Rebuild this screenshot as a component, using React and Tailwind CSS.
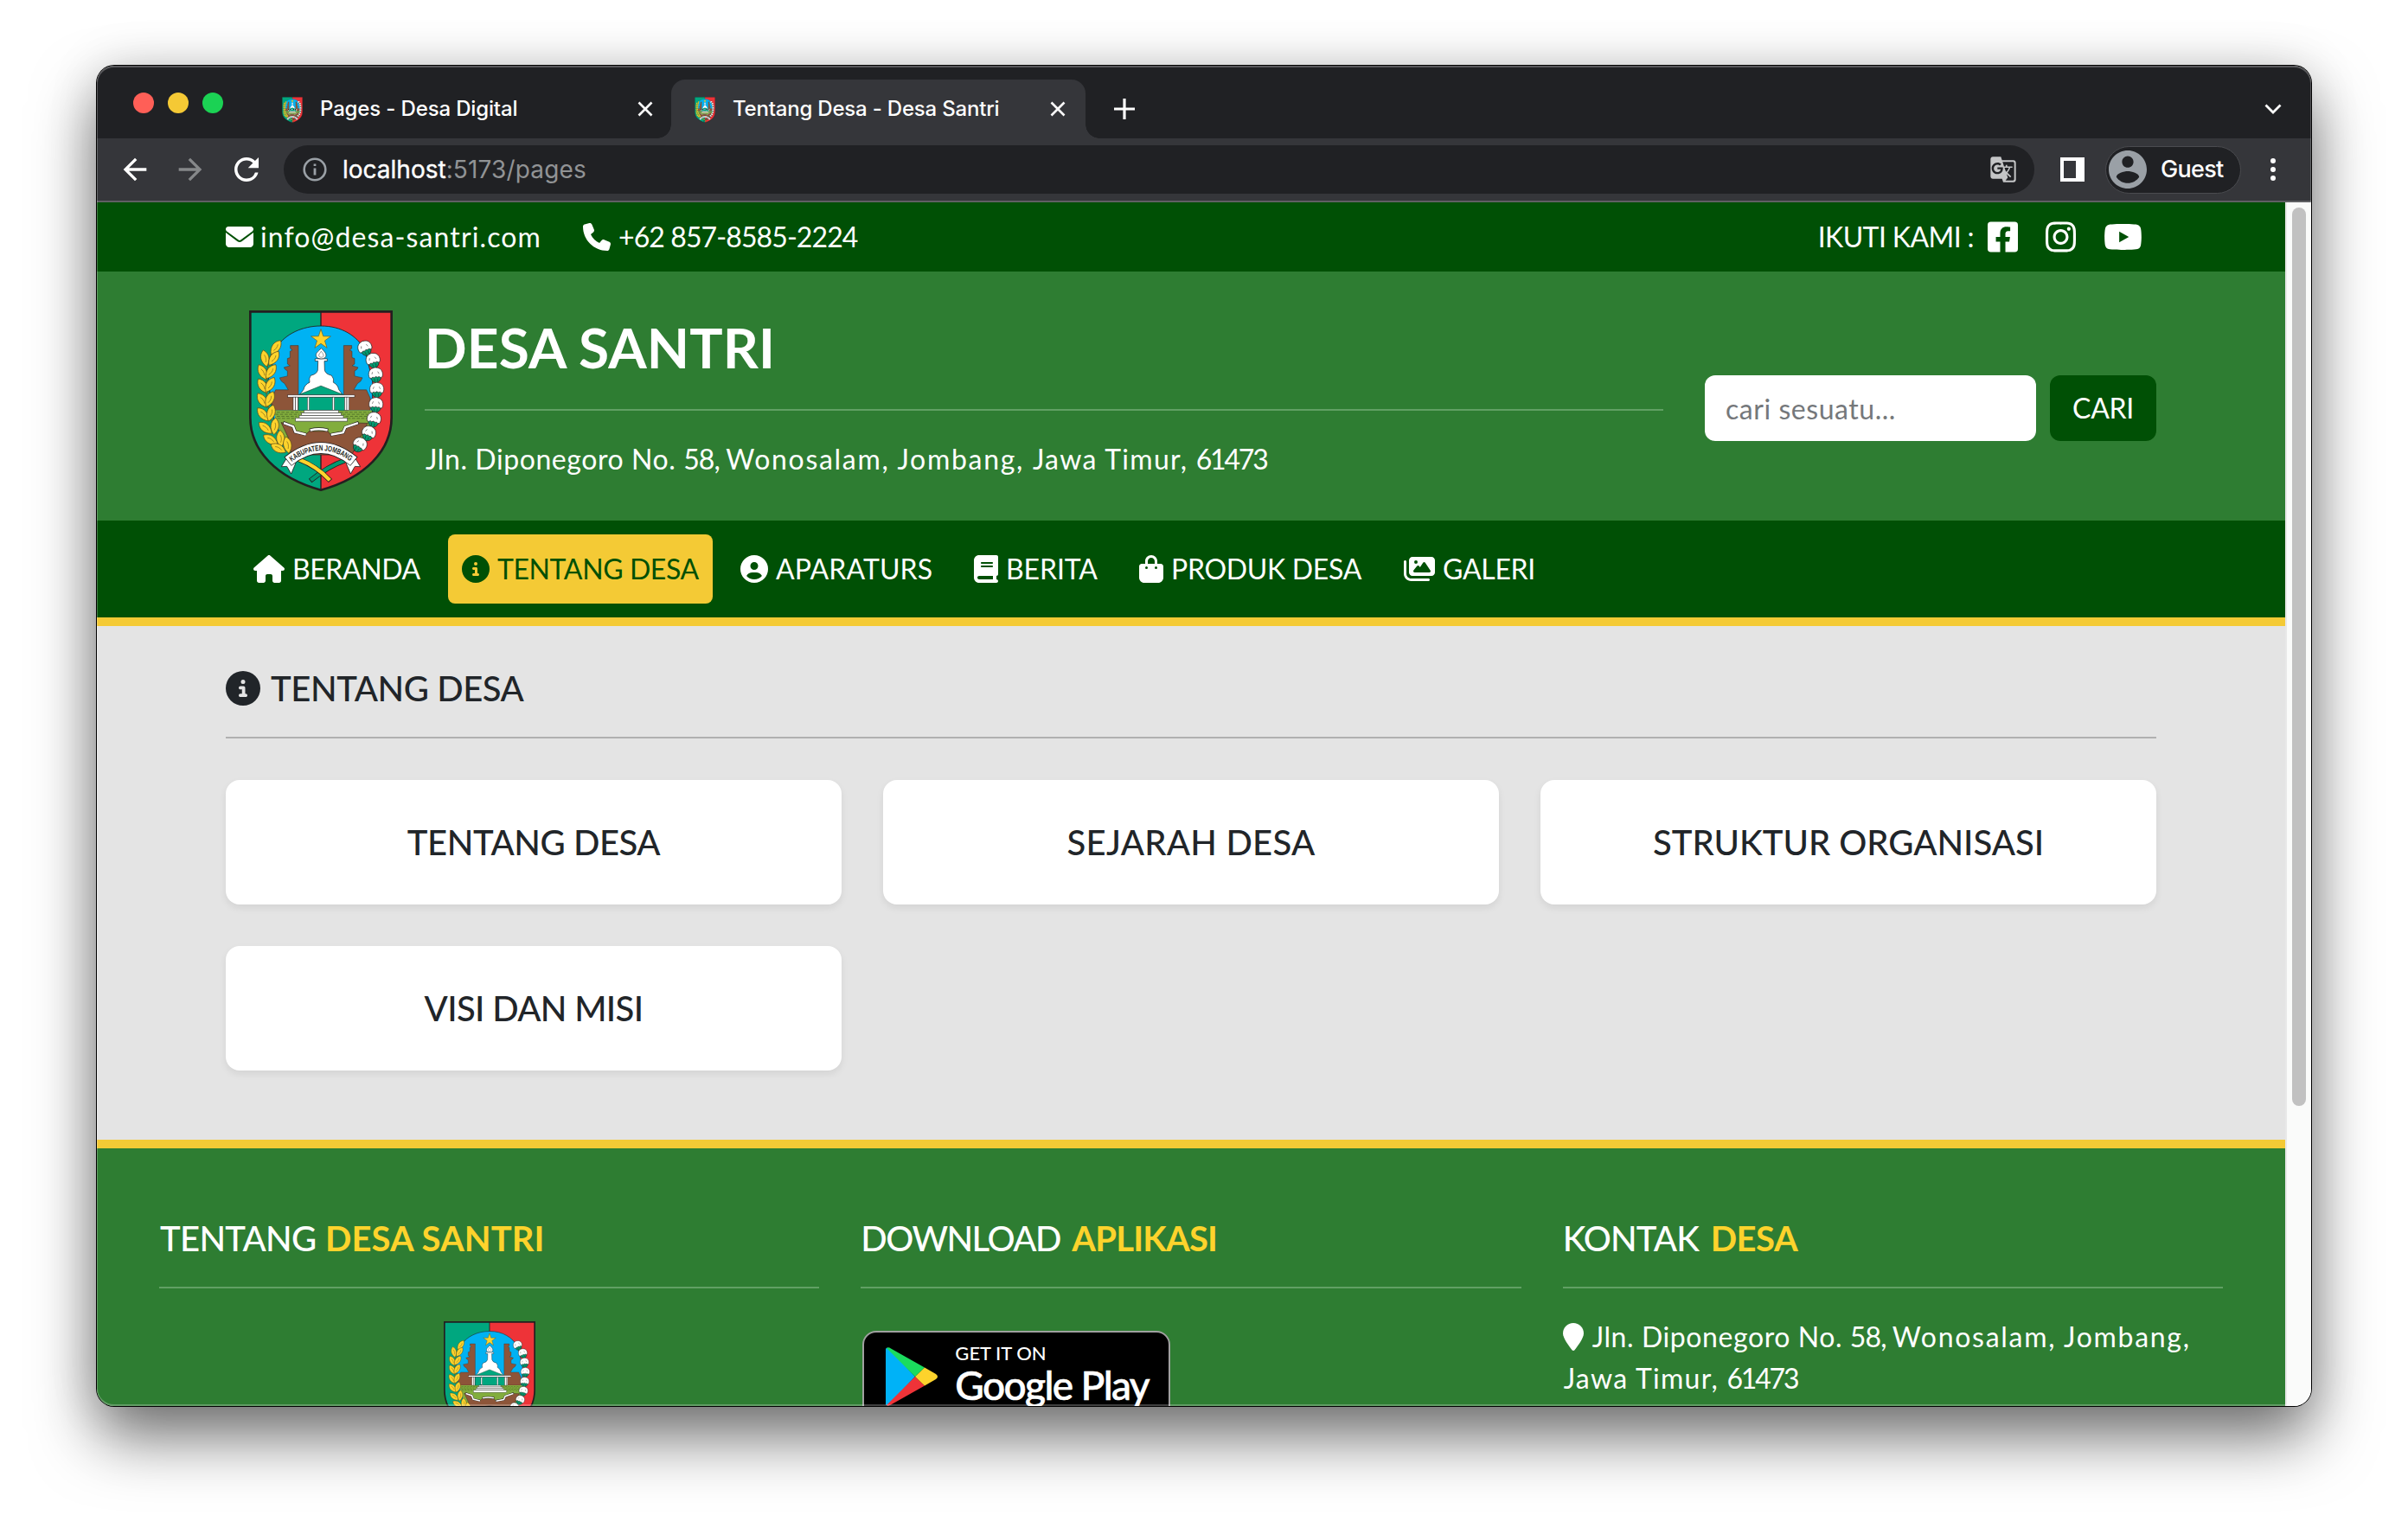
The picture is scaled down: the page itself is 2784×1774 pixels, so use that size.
import React, { useId } from "react";
import {
  FaHouse,
  FaCircleInfo,
  FaCircleUser,
  FaBook,
  FaBagShopping,
  FaImages,
  FaEnvelope,
  FaPhone,
  FaInstagram,
  FaYoutube,
  FaLocationPin,
} from "react-icons/fa6";
import { FaFacebookSquare } from "react-icons/fa";
import { MdArrowBack, MdArrowForward, MdRefresh, MdGTranslate } from "react-icons/md";

/* ---------- Crest of Kabupaten Jombang ---------- */

const STAR = Array.from({ length: 10 }, (_, i) => {
  const r = i % 2 ? 14 : 36;
  const a = (Math.PI / 5) * i - Math.PI / 2;
  return `${(303 + r * Math.cos(a)).toFixed(1)},${(159 + r * Math.sin(a)).toFixed(1)}`;
}).join(" ");

// x, y, rotation of every rice grain, from the tip down
const GRAINS = [
  [147, 186, 35],
  [109, 224, -12], [140, 224, 35],
  [101, 272, -28], [130, 270, 35],
  [101, 320, -32], [127, 316, 30],
  [100, 370, -34], [126, 366, 25],
  [102, 419, -40], [130, 414, 16],
  [110, 466, -50], [143, 460, 6],
  [128, 507, -58], [163, 503, -3],
  [155, 537, -62], [187, 525, -10],
];

// x, y, rotation of every cotton boll, from the tip down
const BOLLS = [
  [456, 188, -22],
  [484, 231, -15],
  [493, 281, -5],
  [497, 333, 0],
  [494, 385, 4],
  [487, 436, 12],
  [469, 484, 22],
  [438, 524, 32],
];

const GATE =
  "225,180 197,180 197,190 204,196 196,200 196,222 187,225 187,244 196,250 175,256 179,263 187,268 187,286 160,292 166,304 177,312 190,334 146,334 133,362 133,405 225,405";

function Crest({ className }) {
  const id = useId();
  return (
    <svg viewBox="54 58 498 628" preserveAspectRatio="none" className={className}>
      <path d="M58 62H303V682C150 640 58 545 58 430Z" fill="#00a77f" />
      <path d="M548 62H303V682C456 640 548 545 548 430Z" fill="#ee3338" />
      <path d="M303 62V682" stroke="#231f20" strokeWidth="4" />
      <path
        d="M303 112C375 112 428 146 455 195L482 300V440L425 545H190L140 440L120 300L150 185C180 140 238 112 303 112Z"
        fill="#00b2f3"
        stroke="#231f20"
        strokeWidth="2.5"
      />
      <g fill="#8d5539" stroke="#3b2a20" strokeWidth="1.5">
        <polygon points={GATE} />
        <g transform="translate(607 0) scale(-1 1)">
          <polygon points={GATE} />
        </g>
      </g>
      <path d="M140 405H480V450L440 520H180L148 450Z" fill="#82ad3d" />
      <g stroke="#3f5a22" strokeWidth="2" strokeDasharray="11 5" fill="none">
        <path d="M150 412H235M145 419H228M150 426H220M152 433H215" />
        <path d="M370 412H470M378 419H472M388 426H468M395 433H470" />
      </g>
      <path
        d="M165 447L207 462L213 480L250 490L262 478H328L336 490L380 485L388 466L430 449L465 450L430 520L410 560H200L190 500Z"
        fill="#8d5539"
        stroke="#3b2a20"
        strokeWidth="2"
      />
      <g stroke="#231f20" strokeWidth="11" fill="none">
        <path d="M172 448L207 461L214 480L252 489" />
        <path d="M434 448L388 464L380 482L336 490" />
        <path d="M264 474Q295 466 328 474" />
      </g>
      <g stroke="#fff" strokeWidth="7.5" fill="none">
        <path d="M174 449L207 461L214 480L251 489" />
        <path d="M432 449L388 464L380 482L338 490" />
        <path d="M266 474Q295 467 326 474" />
      </g>

      <polygon points={STAR} fill="#fdd32c" stroke="#6b5a1c" strokeWidth="2" />
      <g fill="#fff" stroke="#231f20" strokeWidth="2">
        <path d="M283 226H325V234H315L316 266Q320 280 340 284Q350 296 346 308Q362 316 365 333L378 350H230L243 333Q246 316 264 308Q260 294 268 284Q288 280 292 266L293 234H283Z" />
        <path d="M304 189C314 200 321 205 321 214C321 222 313 226 304 226C294 226 286 222 286 213C286 204 296 200 304 189Z" />
        <path d="M304 200C308 206 312 209 312 215C312 223 296 223 296 214C296 209 301 206 304 200Z" strokeWidth="1.3" />
      </g>
      <path d="M303 320L383 352H224Z" fill="#00a77f" stroke="#1c4b3c" strokeWidth="2" />
      <rect x="225" y="359" width="160" height="46" fill="#00a77f" stroke="#1c4b3c" strokeWidth="1.5" />
      <g fill="#fff" stroke="#231f20" strokeWidth="1.5">
        <rect x="188" y="352" width="232" height="7" />
        <rect x="207" y="359" width="8" height="46" />
        <rect x="215" y="359" width="8" height="46" />
        <rect x="256" y="359" width="7" height="46" />
        <rect x="343" y="359" width="7" height="46" />
        <rect x="385" y="359" width="8" height="46" />
        <rect x="393" y="359" width="8" height="46" />
      </g>
      <g fill="#fff" stroke="#444" strokeWidth="2">
        <rect x="244" y="405" width="120" height="9" />
        <rect x="236" y="414" width="137" height="9" />
        <rect x="228" y="423" width="153" height="9" />
        <rect x="215" y="432" width="180" height="11" />
      </g>

      <path d="M140 190C98 260 98 440 190 550" stroke="#6b5a1c" strokeWidth="3" fill="none" />
      <g fill="#fdd32c" stroke="#5a4a18" strokeWidth="2">
        {GRAINS.map(([x, y, r]) => (
          <g key={`${x}-${y}`} transform={`translate(${x} ${y}) rotate(${r})`}>
            <path d="M0 -29C18 -14 19 10 0 30C-19 10 -18 -14 0 -29Z" />
            <path d="M0 -12C4 -4 4 4 0 14" strokeWidth="1.5" fill="none" />
          </g>
        ))}
      </g>
      <g stroke="#231f20" strokeWidth="2">
        {BOLLS.map(([x, y, r]) => (
          <g key={`${x}-${y}`} transform={`translate(${x} ${y}) rotate(${r})`}>
            <path d="M-19 8C-16 20 -10 27 0 28C10 27 16 20 19 8L0 0Z" fill="#009a70" />
            <path
              d="M-22 10C-28 -4 -22 -20 -8 -23Q0 -27 8 -23C22 -20 28 -4 22 10Q16 14 11 8Q5 12 0 7Q-6 13 -11 8Q-16 14 -22 10Z"
              fill="#fff"
            />
            <path d="M-10 -10l-3 8M8 -10l4 8M-6 14l2 10M6 14l-1 10" strokeWidth="1.5" fill="none" />
          </g>
        ))}
      </g>

      <path d="M385 580Q330 598 266 650" stroke="#231f20" strokeWidth="17" fill="none" />
      <path d="M385 580Q330 598 268 648" stroke="#009a70" strokeWidth="13" fill="none" />
      <path d="M225 575Q290 600 336 650" stroke="#231f20" strokeWidth="17" fill="none" />
      <path d="M225 575Q290 600 334 648" stroke="#fdd32c" strokeWidth="13" fill="none" />
      <g fill="#fff" stroke="#231f20" strokeWidth="2.5">
        <path d="M188 565L166 601L185 600L200 626L216 588Z" />
        <path d="M418 565L440 601L421 600L406 626L390 588Z" />
      </g>
      <path d="M188 583Q303 489 418 583" stroke="#231f20" strokeWidth="40" fill="none" />
      <path d="M190 582Q303 490 416 582" stroke="#fff" strokeWidth="35" fill="none" />
      <path id={id} d="M202 584Q303 506 408 584" fill="none" />
      <text
        fontFamily="'Liberation Sans', sans-serif"
        fontSize="27"
        fontWeight="700"
        fill="#231f20"
        textLength="220"
        lengthAdjust="spacingAndGlyphs"
      >
        <textPath href={`#${id}`}>KABUPATEN JOMBANG</textPath>
      </text>
      <path
        d="M58 62H548V430C548 545 456 640 303 682C150 640 58 545 58 430Z"
        fill="none"
        stroke="#231f20"
        strokeWidth="8"
      />
    </svg>
  );
}

/* ---------- Browser chrome ---------- */

function CloseIcon() {
  return (
    <svg viewBox="0 0 16 16" className="size-4 overflow-visible">
      <path d="M0.5 0.5L15.5 15.5M15.5 0.5L0.5 15.5" stroke="#fff" strokeWidth="2.6" />
    </svg>
  );
}

function Tab({ title, active, tracking }) {
  return (
    <div
      className={
        active
          ? "relative flex h-[68px] w-[479px] items-center rounded-t-2xl bg-[#35363a] pr-6 pl-[27px]"
          : "flex h-[68px] w-[478px] items-center pr-[22px] pl-7"
      }
    >
      {active && (
        <>
          <span className="absolute bottom-0 -left-4 size-4 bg-[radial-gradient(circle_at_0_0,transparent_15.5px,#35363a_16px)]" />
          <span className="absolute -right-4 bottom-0 size-4 bg-[radial-gradient(circle_at_100%_0,transparent_15.5px,#35363a_16px)]" />
        </>
      )}
      <Crest className="mt-0.5 h-[30px] w-6" />
      <span className={`ml-5 flex-1 text-2xl font-medium whitespace-nowrap text-white ${tracking}`}>{title}</span>
      <CloseIcon />
    </div>
  );
}

function TabStrip() {
  return (
    <div className="flex h-[84px] items-end bg-[#202124]">
      <div className="flex h-[82px] w-[186px] gap-4 pt-[29px] pl-[42px]">
        <span className="size-6 rounded-full bg-[#ff5f57]" />
        <span className="size-6 rounded-full bg-[#f5c935]" />
        <span className="size-6 rounded-full bg-[#1bd254]" />
      </div>
      <Tab title="Pages - Desa Digital" tracking="tracking-[-0.15px]" />
      <Tab title="Tentang Desa - Desa Santri" tracking="tracking-[-0.2px]" active />
      <div className="flex h-[68px] flex-1 items-center justify-between pr-[34px] pl-[33px]">
        <svg viewBox="0 0 24 24" className="size-6">
          <path d="M12 0V24M0 12H24" stroke="#fff" strokeWidth="3.2" />
        </svg>
        <svg viewBox="0 0 20 12" className="h-3 w-5">
          <path d="M1.5 1.5L10 10L18.5 1.5" stroke="#fff" strokeWidth="2.8" fill="none" />
        </svg>
      </div>
    </div>
  );
}

function Toolbar() {
  return (
    <div className="flex h-[74px] items-center border-b-2 border-[#5f6063] bg-[#35363a] pr-[41px] pl-6 text-[28px]">
      <MdArrowBack className="size-10 text-white" />
      <MdArrowForward className="ml-6 size-10 text-[#86888a]" />
      <MdRefresh className="ml-6 size-[42px] text-white" />
      <div className="ml-[22px] flex h-14 w-[2024px] items-center rounded-full bg-[#202124] pr-5 pl-[22px]">
        <svg viewBox="0 0 28 28" className="size-7">
          <circle cx="14" cy="14" r="12.3" stroke="#9aa0a6" strokeWidth="2.6" fill="none" />
          <path d="M14 12.5V20.5M14 7.5V10" stroke="#9aa0a6" strokeWidth="2.8" />
        </svg>
        <span className="ml-[18px] text-white [-webkit-text-stroke:0.4px_#fff]">localhost</span>
        <span className="flex-1 tracking-[0.15px] text-[#919395]">:5173/pages</span>
        <MdGTranslate className="size-8 text-[#c4c5c6]" />
      </div>
      <div className="ml-[30px] h-7 w-7 border-[4px] border-r-[10px] border-white" />
      <div className="ml-6 flex h-[55px] w-[157px] items-center rounded-full border border-[#4a4b4f] bg-[#202124] text-[27px] font-medium text-white">
        <svg viewBox="2 2 20 20" className="ml-[3px] size-11">
          <path
            fill="#9aa0a6"
            d="M12 2C6.48 2 2 6.48 2 12s4.48 10 10 10 10-4.48 10-10S17.52 2 12 2zm0 3c1.66 0 3 1.34 3 3s-1.34 3-3 3-3-1.34-3-3 1.34-3 3-3zm0 14.2c-2.5 0-4.71-1.28-6-3.22.03-1.99 4-3.08 6-3.08 1.99 0 5.97 1.09 6 3.08-1.29 1.94-3.5 3.22-6 3.22z"
          />
        </svg>
        <span className="ml-4 tracking-[-0.7px]">Guest</span>
      </div>
      <div className="ml-[34px] flex flex-col gap-1">
        <span className="size-1.5 rounded-full bg-white" />
        <span className="size-1.5 rounded-full bg-white" />
        <span className="size-1.5 rounded-full bg-white" />
      </div>
    </div>
  );
}

/* ---------- Site ---------- */

function TopBar() {
  return (
    <div className="flex h-20 items-center bg-[#005005] px-[149px] text-[32px] text-white">
      <div className="flex w-[413px] items-center gap-2">
        <FaEnvelope className="size-8" />
        <span className="tracking-[1.12px] whitespace-nowrap">info@desa-santri.com</span>
      </div>
      <div className="flex flex-1 items-center gap-[9px]">
        <FaPhone className="size-8" />
        <span className="tracking-[-0.9px] whitespace-nowrap">+62 857-8585-2224</span>
      </div>
      <span className="tracking-[-0.6px] whitespace-nowrap">IKUTI KAMI :</span>
      <div className="mr-4 ml-4 flex items-center gap-8">
        <FaFacebookSquare className="h-10 w-[35px]" />
        <FaInstagram className="h-10 w-[35px]" />
        <FaYoutube className="h-10 w-[45px]" />
      </div>
    </div>
  );
}

function Header() {
  return (
    <div className="flex h-72 items-start bg-[#2e7d32] pr-[149px] pl-[176px] text-white">
      <Crest className="mt-[45px] h-[209px] w-[166px]" />
      <div className="ml-[37px] w-[1432px] pt-[49px]">
        <h1 className="text-[64px] leading-[77px] font-bold tracking-[0.1px]">DESA SANTRI</h1>
        <hr className="mt-[33px] border-t-2 border-[#61a064]" />
        <p className="mt-8 pl-px text-[32px] leading-[48px] whitespace-nowrap">
          <span className="tracking-[0.58px]">Jln. Diponegoro No. </span>
          <span className="tracking-[-0.9px]">58, </span>
          <span className="tracking-[1.7px]">Wonosalam, Jombang, </span>
          <span className="tracking-[1.3px]">Jawa Timur, </span>
          <span className="tracking-[-2.2px]">61473</span>
        </p>
      </div>
      <form className="mt-[120px] ml-12 flex gap-4 text-[32px]">
        <input
          placeholder="cari sesuatu..."
          className="h-[76px] w-[383px] rounded-xl bg-white px-6 tracking-[0.54px] placeholder:text-[#75787b]"
        />
        <button type="button" className="h-[76px] w-[123px] rounded-xl bg-[#005005] tracking-[-0.29px]">
          CARI
        </button>
      </form>
    </div>
  );
}

const NAV = [
  { label: "BERANDA", Icon: FaHouse, icon: "w-9", box: "w-[225px] tracking-[-0.4px]" },
  { label: "TENTANG DESA", Icon: FaCircleInfo, icon: "w-8", box: "w-[306px] tracking-[-0.4px]", active: true },
  { label: "APARATURS", Icon: FaCircleUser, icon: "w-8", box: "w-[254px] tracking-[0.1px]" },
  { label: "BERITA", Icon: FaBook, icon: "w-7", box: "w-[175px] tracking-[-0.1px]" },
  { label: "PRODUK DESA", Icon: FaBagShopping, icon: "w-7", box: "w-[290px] tracking-[-0.3px]" },
  { label: "GALERI", Icon: FaImages, icon: "w-9", box: "w-[183px] tracking-[-0.3px]" },
];

function Nav() {
  return (
    <nav className="flex h-[122px] gap-4 border-b-[10px] border-[#f4ca35] bg-[#005005] px-[165px] py-4 text-[32px]">
      {NAV.map(({ label, Icon, icon, box, active }) => (
        <a
          key={label}
          className={`flex h-20 items-center gap-[9px] rounded-lg px-4 whitespace-nowrap ${box} ${
            active ? "bg-[#f4ca35] text-[#005005]" : "text-white"
          }`}
        >
          <Icon className={`h-8 shrink-0 ${icon}`} />
          {label}
        </a>
      ))}
    </nav>
  );
}

const CARDS = [
  { label: "TENTANG DESA", tracking: "tracking-[-0.42px]" },
  { label: "SEJARAH DESA", tracking: "tracking-[0.25px]" },
  { label: "STRUKTUR ORGANISASI", tracking: "tracking-normal" },
  { label: "VISI DAN MISI", tracking: "tracking-[-0.65px]" },
];

function Main() {
  return (
    <main className="bg-[#e4e4e4] px-[149px] pt-12 pb-20 text-[40px] font-medium text-[#212529]">
      <h2 className="flex h-12 items-center gap-3 tracking-[-0.42px]">
        <FaCircleInfo className="size-10" />
        TENTANG DESA
      </h2>
      <hr className="mt-8 border-t-2 border-[#b0b0b0]" />
      <div className="mt-12 grid grid-cols-3 gap-12">
        {CARDS.map(({ label, tracking }) => (
          <div
            key={label}
            className={`flex h-36 items-center justify-center rounded-2xl bg-white shadow-[0_4px_8px_rgba(0,0,0,0.075)] ${tracking}`}
          >
            {label}
          </div>
        ))}
      </div>
    </main>
  );
}

function FooterHeading({ children }) {
  return (
    <>
      <h3 className="flex h-12 items-center text-[40px] font-medium whitespace-nowrap">{children}</h3>
      <hr className="mt-8 border-t-2 border-[#61a064]" />
    </>
  );
}

function PlayBadge() {
  return (
    <div className="mt-[49px] ml-0.5 flex h-[106px] w-[356px] rounded-2xl border-2 border-[#a0a0a0] bg-black pl-6">
      <svg viewBox="0 0 62 68" className="mt-[17px] h-[68px] w-[62px]">
        <path d="M1 2Q2 0 4 1L35 34L4 67Q2 68 1 66Z" fill="#00b2f7" />
        <path d="M2 1Q4 -0.5 7 1.5L46 23.5L35 34Z" fill="#1bdc5e" />
        <path d="M2 67Q4 68.5 7 66.5L46 44.5L35 34Z" fill="#ee3338" />
        <path d="M46 23.5L59 31Q63 34 59 37L46 44.5L35 34Z" fill="#fdd32c" />
      </svg>
      <div className="ml-[19px] pt-[11px] font-medium whitespace-nowrap">
        <p className="text-[22px] leading-[26px]">GET IT ON</p>
        <p className="mt-0.5 text-[46px] leading-[44px] tracking-[-1.6px] [-webkit-text-stroke:0.6px_#fff]">Google Play</p>
      </div>
    </div>
  );
}

function Footer() {
  return (
    <footer className="grid h-[308px] grid-cols-3 gap-12 overflow-hidden border-t-[10px] border-[#f4ca35] bg-[#2e7d32] px-[72px] pt-20 text-white">
      <div>
        <FooterHeading>
          <span className="w-[192px] pl-px tracking-[-0.7px]">TENTANG</span>
          <span className="font-bold tracking-[0.1px] text-[#fdd32c]">DESA SANTRI</span>
        </FooterHeading>
        <Crest className="mx-auto mt-[38px] h-[134px] w-[106px]" />
      </div>
      <div>
        <FooterHeading>
          <span className="w-[244px] tracking-[-1.5px]">DOWNLOAD</span>
          <span className="font-bold tracking-[-0.8px] text-[#fdd32c]">APLIKASI</span>
        </FooterHeading>
        <PlayBadge />
      </div>
      <div>
        <FooterHeading>
          <span className="w-[170px] tracking-[-0.9px]">KONTAK</span>
          <span className="pl-px font-bold tracking-[-0.5px] text-[#fdd32c]">DESA</span>
        </FooterHeading>
        <address className="mt-8 text-[32px] leading-[48px] whitespace-nowrap not-italic">
          <div className="flex items-center gap-2.5">
            <FaLocationPin className="h-8 w-6" />
            <p>
              <span className="tracking-[0.58px]">Jln. Diponegoro No. </span>
              <span className="tracking-[-0.9px]">58, </span>
              <span className="tracking-[1.7px]">Wonosalam, Jombang,</span>
            </p>
          </div>
          <p className="pl-px">
            <span className="tracking-[1.3px]">Jawa Timur, </span>
            <span className="tracking-[-2.2px]">61473</span>
          </p>
        </address>
      </div>
    </footer>
  );
}

export default function App() {
  return (
    <div className="h-[1774px] w-[2784px] overflow-hidden bg-white pt-[76px] pl-28">
      <div className="relative flex h-[1550px] w-[2560px] flex-col overflow-hidden rounded-[20px] font-['Inter',sans-serif] shadow-[0_0_0_1px_#000,0_36px_72px_rgba(0,0,0,0.55),0_0_60px_rgba(0,0,0,0.12)]">
        <TabStrip />
        <Toolbar />
        <div className="flex h-[1392px]">
          <div className="w-[2530px] font-['Lato',sans-serif]">
            <TopBar />
            <Header />
            <Nav />
            <Main />
            <Footer />
          </div>
          <div className="w-[30px] border-l-2 border-[#e8e8e8] bg-[#fafbfa] pt-1.5 pl-1.5">
            <div className="h-[1039px] w-4 rounded-full bg-[#c1c1c1]" />
          </div>
        </div>
        <div className="pointer-events-none absolute inset-0 rounded-[20px] border-x border-y-2 border-white/25" />
      </div>
    </div>
  );
}
